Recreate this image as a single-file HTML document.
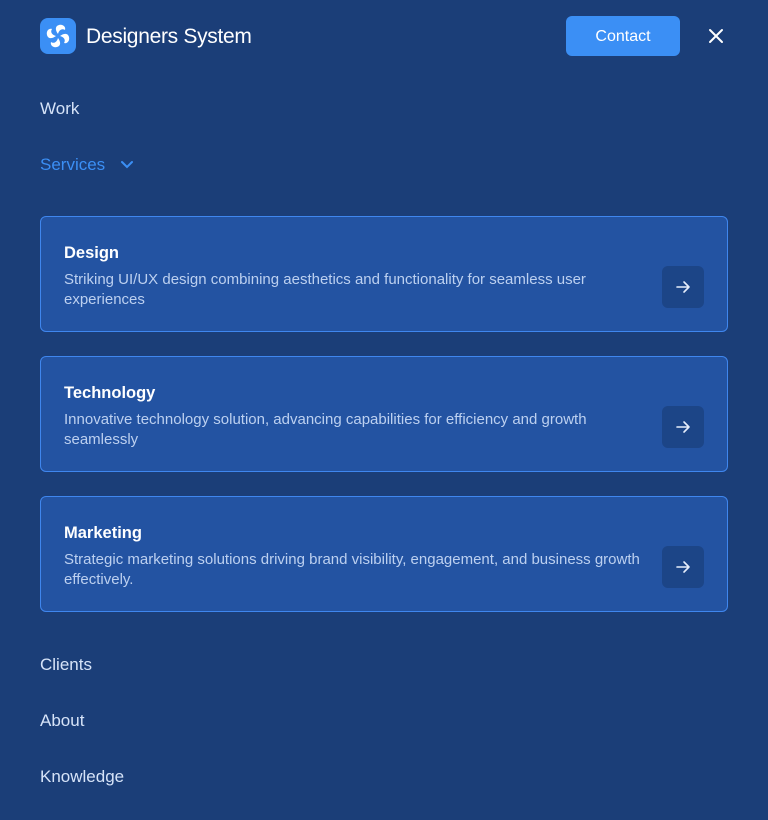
<!DOCTYPE html>
<html><head><meta charset="utf-8"><style>
*{margin:0;padding:0;box-sizing:border-box}
body{width:768px;height:820px;background:#1b3e78;font-family:"Liberation Sans",sans-serif;color:#dbe7fb;position:relative;overflow:hidden}
.logo{position:absolute;left:40px;top:18px;width:36px;height:36px;border-radius:8px;background:#3b8ff5}
.brand{position:absolute;left:86px;top:25px;font-size:21px;color:#fff;letter-spacing:-0.3px}
.contact{position:absolute;left:566px;top:16px;width:114px;height:40px;border-radius:6px;background:#3b8ff5;color:#fff;font-size:16px;text-align:center;line-height:41px}
.x{position:absolute;left:706px;top:26px}
.nav{position:absolute;left:40px;font-size:17px;color:#d6e3f8}
.card{position:absolute;left:40px;width:688px;height:116px;border:1px solid #3f86ee;border-radius:6px;background:#2353a2}
.card h3{position:absolute;left:23px;top:27px;font-size:16.5px;color:#fff;font-weight:bold}
.card p{position:absolute;left:23px;top:53px;width:592px;font-size:15px;line-height:20px;color:#bcd0f0}
.btn{position:absolute;left:621px;top:49px;width:42px;height:42px;border-radius:6px;background:#1c4587}
.btn svg{position:absolute;left:13px;top:13px}
</style></head><body>
<div class="logo"><svg width="36" height="36" viewBox="0 0 36 36"><g fill="#fff"><path d="M18 16 C15 12 15 8 19 7 C23 6 26 9 25 12 C22 10 19 12 18 16Z"/><path d="M20 18 C24 15 28 15 29 19 C30 23 27 26 24 25 C26 22 24 19 20 18Z"/><path d="M18 20 C21 24 21 28 17 29 C13 30 10 27 11 24 C14 26 17 24 18 20Z"/><path d="M16 18 C12 21 8 21 7 17 C6 13 9 10 12 11 C10 14 12 17 16 18Z"/></g></svg></div>
<div class="brand">Designers System</div>
<div class="contact">Contact</div>
<svg class="x" width="20" height="20" viewBox="0 0 20 20"><path d="M4 4L16 16M16 4L4 16" stroke="#fff" stroke-width="2" stroke-linecap="round"/></svg>
<div class="nav" style="top:99px">Work</div>
<div class="nav" style="top:155px;color:#3b8ff5">Services <svg style="margin-left:10px;vertical-align:1px" width="14" height="10" viewBox="0 0 14 10"><path d="M2 3L7 8L12 3" stroke="#3b8ff5" stroke-width="2" fill="none" stroke-linecap="round"/></svg></div>
<div class="card" style="top:216px"><h3>Design</h3><p>Striking UI/UX design combining aesthetics and functionality for seamless user experiences</p><div class="btn"><svg width="16" height="16" viewBox="0 0 16 16"><path d="M2 8H14M9 3L14 8L9 13" stroke="#e6eefc" stroke-width="1.6" fill="none" stroke-linecap="round" stroke-linejoin="round"/></svg></div></div>
<div class="card" style="top:356px"><h3>Technology</h3><p>Innovative technology solution, advancing capabilities for efficiency and growth seamlessly</p><div class="btn"><svg width="16" height="16" viewBox="0 0 16 16"><path d="M2 8H14M9 3L14 8L9 13" stroke="#e6eefc" stroke-width="1.6" fill="none" stroke-linecap="round" stroke-linejoin="round"/></svg></div></div>
<div class="card" style="top:496px"><h3>Marketing</h3><p>Strategic marketing solutions driving brand visibility, engagement, and business growth effectively.</p><div class="btn"><svg width="16" height="16" viewBox="0 0 16 16"><path d="M2 8H14M9 3L14 8L9 13" stroke="#e6eefc" stroke-width="1.6" fill="none" stroke-linecap="round" stroke-linejoin="round"/></svg></div></div>
<div class="nav" style="top:655px">Clients</div>
<div class="nav" style="top:711px">About</div>
<div class="nav" style="top:767px">Knowledge</div>
</body></html>
